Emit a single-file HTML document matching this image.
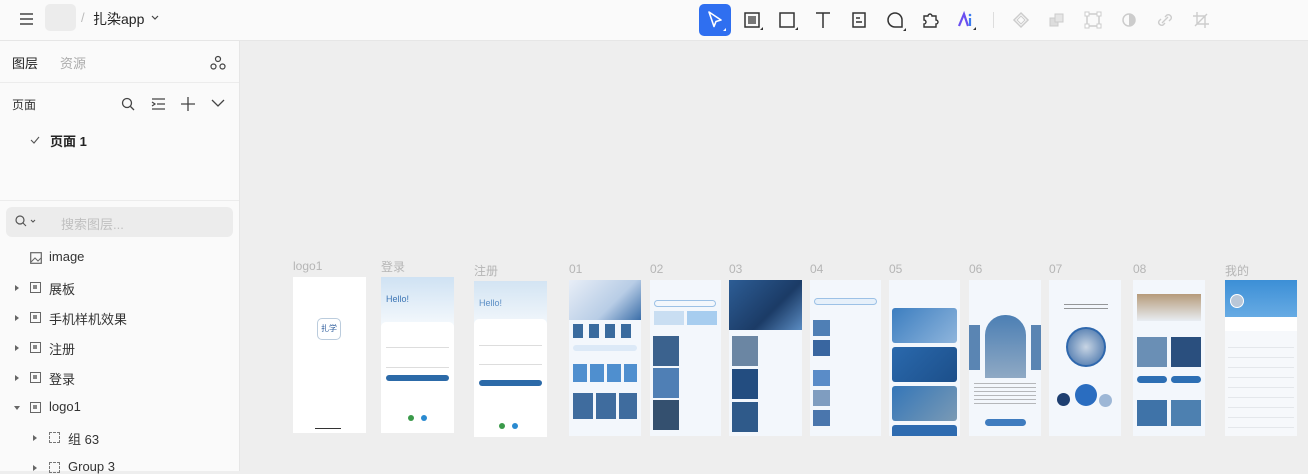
<!DOCTYPE html>
<html><head><meta charset="utf-8"><style>
*{margin:0;padding:0;box-sizing:border-box}
body{width:1308px;height:471px;overflow:hidden;background:#eeeeee;font-family:"Liberation Sans","Noto Sans CJK SC",sans-serif;color:#222;position:relative}
.top{position:absolute;left:0;top:0;width:1308px;height:41px;background:#fafafa;border-bottom:1px solid #e6e6e6}
.side{position:absolute;left:0;top:41px;width:240px;height:430px;background:#fafafa;border-right:1px solid #e6e6e6}
.abs{position:absolute}
.t13{font-size:13px}
.lbl{position:absolute;font-size:12px;color:#b5b5b5}
.fr{position:absolute;background:#fff;overflow:hidden}
.row{position:absolute;left:0;font-size:13px;color:#333}
.ic{position:absolute;width:11px;height:11px;border:1.3px solid #666}
.ic::after{content:"";position:absolute;left:2px;top:2px;width:4px;height:4px;background:#888}
.tri{position:absolute;width:0;height:0;border-left:4px solid #666;border-top:3px solid transparent;border-bottom:3px solid transparent}
.tb{position:absolute;top:4px;width:32px;height:32px}
</style></head><body>
<div class="top">
  <svg class="abs" style="left:20px;top:13px" width="14" height="12"><path d="M0 1h13M0 6h13M0 11h13" stroke="#444" stroke-width="1.4"/></svg>
  <div class="abs" style="left:45px;top:4px;width:31px;height:27px;background:#ececec;border-radius:5px"></div>
  <div class="abs" style="left:81px;top:10px;font-size:13px;color:#bbb">/</div>
  <div class="abs" style="left:93px;top:9px;font-size:14px;color:#222">扎染app</div>
  <svg class="abs" style="left:151px;top:15px" width="8" height="6"><path d="M1 1l3 3 3-3" stroke="#444" fill="none" stroke-width="1.2"/></svg>
  <div class="tb" style="left:699px;background:#2f6ff0;border-radius:5px"><svg width="32" height="32"><path d="M10 8l12 8-5 1.5-2 5z" fill="none" stroke="#fff" stroke-width="1.6" stroke-linejoin="round"/><path d="M27 27v-3l-3 3z" fill="#fff"/></svg></div>
  <svg class="tb" style="left:737px" width="32" height="32"><rect x="8" y="9" width="14" height="14" fill="none" stroke="#333" stroke-width="1.5"/><rect x="11" y="12" width="8" height="8" fill="#777"/><path d="M26 26v-3l-3 3z" fill="#333"/></svg>
  <svg class="tb" style="left:771px" width="32" height="32"><rect x="9" y="9" width="14" height="14" fill="none" stroke="#333" stroke-width="1.5"/><path d="M27 26v-3l-3 3z" fill="#333"/></svg>
  <svg class="tb" style="left:807px" width="32" height="32"><path d="M9 9h14M16 9v15" stroke="#333" stroke-width="1.5"/></svg>
  <svg class="tb" style="left:843px" width="32" height="32"><rect x="10" y="9" width="12" height="14" fill="none" stroke="#333" stroke-width="1.5"/><path d="M13 14h4M13 18h6" stroke="#333" stroke-width="1.4"/></svg>
  <svg class="tb" style="left:879px" width="32" height="32"><path d="M16 9a7 7 0 1 0 0 14h7v-7a7 7 0 0 0-7-7z" fill="none" stroke="#333" stroke-width="1.5"/><path d="M27 27v-3l-3 3z" fill="#333"/></svg>
  <svg class="tb" style="left:914px" width="32" height="32"><path d="M10 12h4a2 2 0 1 1 4 0h4v4a2 2 0 1 1 0 4v3H10v-3a2 2 0 1 0 0-4z" fill="none" stroke="#333" stroke-width="1.4"/></svg>
  <svg class="tb" style="left:950px" width="32" height="32"><path d="M9 22l5-12 4 12" fill="none" stroke="#6a4ff0" stroke-width="2.2"/><path d="M20 14v8" stroke="#3b7cf0" stroke-width="2.2"/><circle cx="20" cy="11" r="1.3" fill="#3b7cf0"/><path d="M26 26v-3l-3 3z" fill="#333"/></svg>
  <div class="abs" style="left:993px;top:12px;width:1px;height:16px;background:#ddd"></div>
  <svg class="tb" style="left:1005px" width="32" height="32"><path d="M16 9l7 7-7 7-7-7z" fill="none" stroke="#ccc" stroke-width="1.5"/><path d="M16 12l4 4-4 4-4-4z" fill="none" stroke="#ccc"/></svg>
  <svg class="tb" style="left:1041px" width="32" height="32"><rect x="9" y="14" width="8" height="8" fill="#ddd" stroke="#ccc"/><rect x="14" y="10" width="8" height="8" fill="#e5e5e5" stroke="#ccc"/></svg>
  <svg class="tb" style="left:1077px" width="32" height="32"><rect x="10" y="10" width="12" height="12" fill="none" stroke="#ccc" stroke-width="1.5"/><rect x="8" y="8" width="4" height="4" fill="#fff" stroke="#ccc"/><rect x="20" y="8" width="4" height="4" fill="#fff" stroke="#ccc"/><rect x="8" y="20" width="4" height="4" fill="#fff" stroke="#ccc"/><rect x="20" y="20" width="4" height="4" fill="#fff" stroke="#ccc"/></svg>
  <svg class="tb" style="left:1113px" width="32" height="32"><circle cx="16" cy="16" r="6" fill="none" stroke="#ccc" stroke-width="1.5"/><path d="M16 10a6 6 0 0 1 0 12z" fill="#ccc"/></svg>
  <svg class="tb" style="left:1149px" width="32" height="32"><path d="M13 19l6-6M12 15l-2 2a3 3 0 0 0 4 4l2-2M20 17l2-2a3 3 0 0 0-4-4l-2 2" fill="none" stroke="#ccc" stroke-width="1.4"/></svg>
  <svg class="tb" style="left:1185px" width="32" height="32"><path d="M12 8v12h12M8 12h12v12M10 22l12-12" fill="none" stroke="#ccc" stroke-width="1.4"/></svg>
</div>
<div class="side">
  <div class="abs t13" style="left:12px;top:12px;color:#222">图层</div>
  <div class="abs t13" style="left:60px;top:12px;color:#aaa">资源</div>
  <svg class="abs" style="left:210px;top:14px" width="16" height="16"><circle cx="8" cy="4" r="2.5" fill="none" stroke="#444" stroke-width="1.2"/><circle cx="3.5" cy="11.5" r="2.5" fill="none" stroke="#444" stroke-width="1.2"/><circle cx="12.5" cy="11.5" r="2.5" fill="none" stroke="#444" stroke-width="1.2"/></svg>
  <div class="abs" style="left:0;top:41px;width:239px;height:1px;background:#ececec"></div>
  <div class="abs" style="left:12px;top:55px;font-size:12px;color:#333">页面</div>
  <svg class="abs" style="left:121px;top:56px" width="14" height="14"><circle cx="6" cy="6" r="4.5" fill="none" stroke="#444" stroke-width="1.3"/><path d="M9.5 9.5l3.5 3.5" stroke="#444" stroke-width="1.3"/></svg>
  <svg class="abs" style="left:151px;top:57px" width="15" height="12"><path d="M1 1h13M6 6h8M1 11h13M1 4l3 2-3 2" fill="none" stroke="#444" stroke-width="1.2"/></svg>
  <svg class="abs" style="left:181px;top:56px" width="14" height="14"><path d="M7 0v14M0 7h14" stroke="#444" stroke-width="1.3"/></svg>
  <svg class="abs" style="left:211px;top:58px" width="14" height="9"><path d="M1 1l6 6 6-6" fill="none" stroke="#444" stroke-width="1.3"/></svg>
  <svg class="abs" style="left:30px;top:95px" width="10" height="8"><path d="M1 4l3 3 5-6" fill="none" stroke="#555" stroke-width="1.1"/></svg>
  <div class="abs t13" style="left:50px;top:90px;font-weight:bold;color:#222">页面 1</div>
  <div class="abs" style="left:0;top:159px;width:239px;height:1px;background:#ececec"></div>
  <div class="abs" style="left:6px;top:166px;width:227px;height:30px;background:#ececec;border-radius:6px"></div>
  <svg class="abs" style="left:15px;top:174px" width="22" height="12"><circle cx="5" cy="5" r="4" fill="none" stroke="#555" stroke-width="1.2"/><path d="M8 8l3 3M16 5l2 2 2-2" fill="none" stroke="#555" stroke-width="1.1"/></svg>
  <div class="abs" style="left:61px;top:173px;font-size:13px;color:#c0c0c0">搜索图层...</div>
  <svg class="abs" style="left:30px;top:211px" width="12" height="12"><rect x="0.7" y="0.7" width="10.6" height="10.6" fill="none" stroke="#666" stroke-width="1.2"/><path d="M1 10l4-4 3 3 3-3" fill="none" stroke="#666"/></svg>
  <div class="row" style="left:49px;top:208px">image</div>
  <div class="tri" style="left:15px;top:244px"></div><div class="ic" style="left:30px;top:241px"></div><div class="row" style="left:49px;top:238px">展板</div>
  <div class="tri" style="left:15px;top:274px"></div><div class="ic" style="left:30px;top:271px"></div><div class="row" style="left:49px;top:268px">手机样机效果</div>
  <div class="tri" style="left:15px;top:304px"></div><div class="ic" style="left:30px;top:301px"></div><div class="row" style="left:49px;top:298px">注册</div>
  <div class="tri" style="left:15px;top:334px"></div><div class="ic" style="left:30px;top:331px"></div><div class="row" style="left:49px;top:328px">登录</div>
  <div class="abs" style="left:14px;top:365px;width:0;height:0;border-top:4px solid #666;border-left:3px solid transparent;border-right:3px solid transparent"></div><div class="ic" style="left:30px;top:361px"></div><div class="row" style="left:49px;top:358px">logo1</div>
  <div class="tri" style="left:33px;top:394px"></div><div class="abs" style="left:49px;top:391px;width:11px;height:11px;border:1.2px dashed #777"></div><div class="row" style="left:68px;top:388px">组 63</div>
  <div class="tri" style="left:33px;top:424px"></div><div class="abs" style="left:49px;top:421px;width:11px;height:11px;border:1.2px dashed #777"></div><div class="row" style="left:68px;top:418px">Group 3</div>
</div>

<div class="lbl" style="left:293px;top:259px">logo1</div>
<div class="lbl" style="left:381px;top:258px">登录</div>
<div class="lbl" style="left:474px;top:262px">注册</div>
<div class="lbl" style="left:569px;top:262px">01</div>
<div class="lbl" style="left:650px;top:262px">02</div>
<div class="lbl" style="left:729px;top:262px">03</div>
<div class="lbl" style="left:810px;top:262px">04</div>
<div class="lbl" style="left:889px;top:262px">05</div>
<div class="lbl" style="left:969px;top:262px">06</div>
<div class="lbl" style="left:1049px;top:262px">07</div>
<div class="lbl" style="left:1133px;top:262px">08</div>
<div class="lbl" style="left:1225px;top:262px">我的</div>

<div class="fr" style="left:293px;top:277px;width:73px;height:156px">
  <div class="abs" style="left:24px;top:41px;width:24px;height:22px;border:1px solid #bcd;border-radius:5px;font-size:8px;color:#2a5a9a;text-align:center;line-height:20px">扎学</div>
  <div class="abs" style="left:22px;top:151px;width:26px;height:1px;background:#333"></div>
</div>
<div class="fr" style="left:381px;top:277px;width:73px;height:156px;background:linear-gradient(#cfe2f3,#fff 40%)">
  <div class="abs" style="left:5px;top:17px;font-size:9px;color:#3d76b5">Hello!</div>
  <div class="abs" style="left:0;top:45px;width:73px;height:111px;background:#fff;border-radius:5px"></div>
  <div class="abs" style="left:5px;top:70px;width:63px;height:1px;background:#ddd"></div>
  <div class="abs" style="left:5px;top:90px;width:63px;height:1px;background:#ddd"></div>
  <div class="abs" style="left:5px;top:98px;width:63px;height:6px;background:#2c6aa8;border-radius:3px"></div>
  <div class="abs" style="left:27px;top:138px;width:6px;height:6px;background:#3a9a4a;border-radius:50%"></div>
  <div class="abs" style="left:40px;top:138px;width:6px;height:6px;background:#2a8ad0;border-radius:50%"></div>
</div>
<div class="fr" style="left:474px;top:281px;width:73px;height:156px;background:linear-gradient(#d3e4f3,#fff 40%)">
  <div class="abs" style="left:5px;top:17px;font-size:9px;color:#5b8ec5">Hello!</div>
  <div class="abs" style="left:0;top:38px;width:73px;height:118px;background:#fff;border-radius:5px"></div>
  <div class="abs" style="left:5px;top:64px;width:63px;height:1px;background:#ddd"></div>
  <div class="abs" style="left:5px;top:83px;width:63px;height:1px;background:#ddd"></div>
  <div class="abs" style="left:5px;top:99px;width:63px;height:6px;background:#2c6aa8;border-radius:3px"></div>
  <div class="abs" style="left:25px;top:142px;width:6px;height:6px;background:#3a9a4a;border-radius:50%"></div>
  <div class="abs" style="left:38px;top:142px;width:6px;height:6px;background:#2a8ad0;border-radius:50%"></div>
</div>
<div class="fr" style="left:569px;top:280px;width:72px;height:156px;background:#f3f7fc">
  <div class="abs" style="left:0;top:0;width:72px;height:40px;background:linear-gradient(135deg,#e8eef7,#b8cde6 60%,#3b6ea8)"></div>
  <div class="abs" style="left:4px;top:44px;width:64px;height:14px;background:repeating-linear-gradient(90deg,#3a6b9e 0 10px,transparent 10px 16px)"></div>
  <div class="abs" style="left:4px;top:65px;width:64px;height:6px;background:#dce9f7;border-radius:3px"></div>
  <div class="abs" style="left:4px;top:84px;width:64px;height:18px;background:repeating-linear-gradient(90deg,#4f8fcf 0 14px,transparent 14px 17px)"></div>
  <div class="abs" style="left:4px;top:113px;width:64px;height:26px;background:repeating-linear-gradient(90deg,#3f6c9e 0 20px,transparent 20px 23px)"></div>
</div>
<div class="fr" style="left:650px;top:280px;width:71px;height:156px;background:#f3f7fc">
  <div class="abs" style="left:4px;top:20px;width:62px;height:7px;border:1px solid #9cc1e6;border-radius:4px"></div>
  <div class="abs" style="left:4px;top:31px;width:30px;height:14px;background:#c9def2"></div>
  <div class="abs" style="left:37px;top:31px;width:30px;height:14px;background:#a7cdef"></div>
  <div class="abs" style="left:3px;top:56px;width:26px;height:30px;background:#3b628e"></div>
  <div class="abs" style="left:3px;top:88px;width:26px;height:30px;background:#4f7fb5"></div>
  <div class="abs" style="left:3px;top:120px;width:26px;height:30px;background:#34506f"></div>
</div>
<div class="fr" style="left:729px;top:280px;width:73px;height:156px;background:#f3f7fc">
  <div class="abs" style="left:0;top:0;width:73px;height:50px;background:linear-gradient(135deg,#2d5d95,#1b3b66 60%,#5b8cc2)"></div>
  <div class="abs" style="left:3px;top:56px;width:26px;height:30px;background:#6b86a3"></div>
  <div class="abs" style="left:3px;top:89px;width:26px;height:30px;background:#234d80"></div>
  <div class="abs" style="left:3px;top:122px;width:26px;height:30px;background:#2f5a8a"></div>
</div>
<div class="fr" style="left:810px;top:280px;width:71px;height:156px;background:#f3f7fc">
  <div class="abs" style="left:4px;top:18px;width:63px;height:7px;border:1px solid #9cc1e6;border-radius:4px;background:#e6f0fa"></div>
  <div class="abs" style="left:3px;top:40px;width:17px;height:16px;background:#4f7fb5"></div>
  <div class="abs" style="left:3px;top:60px;width:17px;height:16px;background:#3966a0"></div>
  <div class="abs" style="left:3px;top:90px;width:17px;height:16px;background:#5a8cc8"></div>
  <div class="abs" style="left:3px;top:110px;width:17px;height:16px;background:#7f9dc0"></div>
  <div class="abs" style="left:3px;top:130px;width:17px;height:16px;background:#4a76ad"></div>
</div>
<div class="fr" style="left:889px;top:280px;width:71px;height:156px;background:#f3f7fc">
  <div class="abs" style="left:3px;top:28px;width:65px;height:35px;background:linear-gradient(135deg,#3c7ec0,#8fb5dc);border-radius:3px"></div>
  <div class="abs" style="left:3px;top:67px;width:65px;height:35px;background:linear-gradient(135deg,#2a69ad,#1c4f8a);border-radius:3px"></div>
  <div class="abs" style="left:3px;top:106px;width:65px;height:35px;background:linear-gradient(135deg,#3476b8,#7a9ab5);border-radius:3px"></div>
  <div class="abs" style="left:3px;top:145px;width:65px;height:15px;background:#2e6bb0;border-radius:3px"></div>
</div>
<div class="fr" style="left:969px;top:280px;width:72px;height:156px;background:#f3f7fc">
  <div class="abs" style="left:16px;top:35px;width:41px;height:63px;background:linear-gradient(#4c7fb4,#8fa9c4);border-radius:20px 20px 0 0"></div>
  <div class="abs" style="left:0;top:45px;width:11px;height:45px;background:#5a85b3"></div>
  <div class="abs" style="left:62px;top:45px;width:10px;height:45px;background:#5a85b3"></div>
  <div class="abs" style="left:5px;top:103px;width:62px;height:22px;background:repeating-linear-gradient(#777 0 1px,transparent 1px 4px);opacity:.5"></div>
  <div class="abs" style="left:16px;top:139px;width:41px;height:7px;background:#3f7cbf;border-radius:4px"></div>
</div>
<div class="fr" style="left:1049px;top:280px;width:72px;height:156px;background:#f3f7fc">
  <div class="abs" style="left:15px;top:24px;width:44px;height:8px;background:repeating-linear-gradient(#555 0 1px,transparent 1px 4px);opacity:.6"></div>
  <div class="abs" style="left:17px;top:47px;width:40px;height:40px;border-radius:50%;background:radial-gradient(#c8d5e4,#3a6aa5);border:2px solid #2f68ad"></div>
  <div class="abs" style="left:26px;top:104px;width:22px;height:22px;border-radius:50%;background:#2a6dc0"></div>
  <div class="abs" style="left:8px;top:113px;width:13px;height:13px;border-radius:50%;background:#1e3f70"></div>
  <div class="abs" style="left:50px;top:114px;width:13px;height:13px;border-radius:50%;background:#9db7d6"></div>
</div>
<div class="fr" style="left:1133px;top:280px;width:72px;height:156px;background:#f3f7fc">
  <div class="abs" style="left:4px;top:14px;width:64px;height:27px;background:linear-gradient(#b69b7a,#e8edf2)"></div>
  <div class="abs" style="left:4px;top:57px;width:30px;height:30px;background:#6a8fb5"></div>
  <div class="abs" style="left:38px;top:57px;width:30px;height:30px;background:#2a4f7e"></div>
  <div class="abs" style="left:4px;top:96px;width:30px;height:7px;background:#2d6fb4;border-radius:4px"></div>
  <div class="abs" style="left:38px;top:96px;width:30px;height:7px;background:#2d6fb4;border-radius:4px"></div>
  <div class="abs" style="left:4px;top:120px;width:30px;height:26px;background:#3f73a8"></div>
  <div class="abs" style="left:38px;top:120px;width:30px;height:26px;background:#4d80b0"></div>
</div>
<div class="fr" style="left:1225px;top:280px;width:72px;height:156px;background:#f6f8fb">
  <div class="abs" style="left:0;top:0;width:72px;height:44px;background:linear-gradient(#3c8fd6,#6fb0e6)"></div>
  <div class="abs" style="left:5px;top:14px;width:14px;height:14px;border-radius:50%;background:#b9c7d8;border:1px solid #fff"></div>
  <div class="abs" style="left:0;top:37px;width:72px;height:14px;background:#fff"></div>
  <div class="abs" style="left:3px;top:58px;width:66px;height:90px;background:repeating-linear-gradient(transparent 0 9px,#e4e7eb 9px 10px)"></div>
</div>
</body></html>
